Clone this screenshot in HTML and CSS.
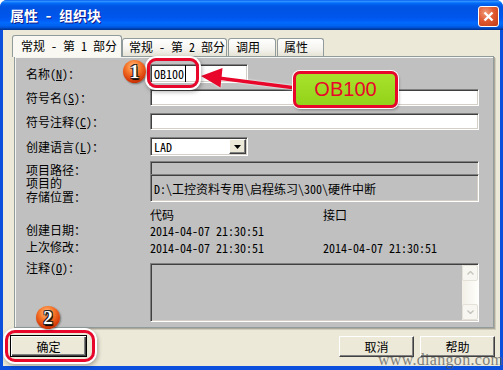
FILE: index.html
```html
<!DOCTYPE html>
<html lang="zh-CN">
<head>
    <meta charset="UTF-8">
    <title>属性 - 组织块</title>
    <link rel="stylesheet" href="styles.css">
</head>
<body>

    <div class="window">
        <div class="titlebar">
            <span class="title">属性 - 组织块</span>
            <span class="close">
                <svg width="13" height="13" viewBox="0 0 13 13"><path d="M2.5 2.5 L10.5 10.5 M10.5 2.5 L2.5 10.5" stroke="#fff" stroke-width="2.4"/></svg>
            </span>
        </div>

        <div class="client">
            <div class="tabs">
                <div class="tab active t1">常规 - 第 1 部分</div>
                <div class="tab t2">常规 - 第 2 部分</div>
                <div class="tab t3">调用</div>
                <div class="tab t4">属性</div>
            </div>

            <div class="pane">
                <div class="row r-name">
                    <label>名称(<u>N</u>)：</label>
                    <div class="field short"><span class="caret">OB100</span></div>
                </div>
                <div class="row r-sym">
                    <label>符号名(<u>S</u>)：</label>
                    <div class="field wide"></div>
                </div>
                <div class="row r-cmt">
                    <label>符号注释(<u>C</u>)：</label>
                    <div class="field wide"></div>
                </div>
                <div class="row r-lang">
                    <label>创建语言(<u>L</u>)：</label>
                    <div class="field short select">
                        <span>LAD</span>
                        <span class="drop"><svg width="7" height="4" viewBox="0 0 7 4"><path d="M0 0 H7 L3.5 4 Z" fill="#000"/></svg></span>
                    </div>
                </div>
                <div class="row r-path">
                    <label>项目路径：</label>
                    <div class="field wide off"></div>
                </div>
                <div class="row r-store">
                    <label>项目的<br>存储位置：</label>
                    <div class="field wide off">D:\工控资料专用\启程练习\300\硬件中断</div>
                </div>
                <div class="row r-head info">
                    <label></label>
                    <span class="c1">代码</span>
                    <span>接口</span>
                </div>
                <div class="row r-made info">
                    <label>创建日期：</label>
                    <span class="c1">2014-04-07 21:30:51</span>
                </div>
                <div class="row r-mod info">
                    <label>上次修改：</label>
                    <span class="c1">2014-04-07 21:30:51</span>
                    <span>2014-04-07 21:30:51</span>
                </div>
                <div class="row r-note">
                    <label>注释(<u>O</u>)：</label>
                    <div class="field wide off memo">
                        <div class="scroll">
                            <span class="sbtn"><svg width="7" height="4" viewBox="0 0 7 4"><path d="M0.5 3.5 L3.5 0.5 L6.5 3.5" fill="none" stroke="#c4c4bc" stroke-width="1.4"/></svg></span>
                            <span class="sbtn"><svg width="7" height="4" viewBox="0 0 7 4"><path d="M0.5 0.5 L3.5 3.5 L6.5 0.5" fill="none" stroke="#c4c4bc" stroke-width="1.4"/></svg></span>
                        </div>
                    </div>
                </div>
            </div>

            <div class="buttons">
                <button class="btn ok">确定</button>
                <button class="btn cancel">取消</button>
                <button class="btn help">帮助</button>
            </div>
        </div>

        <div class="watermark">www.diangon.com</div>

        <!-- annotations drawn over the dialog -->
        <svg class="arrow" width="503" height="370" viewBox="0 0 503 370">
            <line x1="296" y1="88" x2="214" y2="77.5" stroke="#e8062a" stroke-width="3.5"/>
            <polygon points="201,76 222.5,68 220.5,87.5" fill="#e8062a"/>
        </svg>
        <div class="mark mark-name"></div>
        <div class="ball ball-1">1</div>
        <div class="callout">OB100</div>
        <div class="mark mark-ok"></div>
        <div class="ball ball-2">2</div>
    </div>

</body>
</html>
```

FILE: styles.css
```css
body {
    margin: 0;
    background: #fff;
    font-family: "Noto Sans Mono CJK SC", "Noto Sans CJK SC", monospace;
    font-size: 12px;
    color: #000;
}

.window {
    position: relative;
    width: 503px;
    height: 370px;
    box-sizing: border-box;
    padding: 0 3px 4px;
    background: #0a50dc;
    border-radius: 7px 7px 0 0;
    overflow: hidden;
    display: flex;
    flex-direction: column;
}

.titlebar {
    flex: none;
    height: 30px;
    margin: 0 -3px;
    padding: 0 4px 0 10px;
    display: flex;
    align-items: center;
    justify-content: space-between;
    background: linear-gradient(#0058ee 0%, #3593ff 4%, #288eff 6%, #127dff 8%, #036ffc 10%, #0262ee 14%, #0057e5 20%, #0054e3 24%, #0055eb 56%, #005bf5 66%, #026afe 76%, #0062ef 86%, #0052d6 92%, #0040ab 96%, #003092 100%);
}

.title {
    color: #fff;
    font-weight: bold;
    font-size: 14px;
    white-space: pre;
    text-shadow: 1px 1px #0f1a8a;
}

.close {
    width: 21px;
    height: 21px;
    margin-top: 2px;
    box-sizing: border-box;
    border: 1px solid #fff;
    border-radius: 3px;
    background: radial-gradient(circle at 35% 30%, #f09a7a, #e05a32 45%, #c23a14);
    display: flex;
    align-items: center;
    justify-content: center;
}

.client {
    flex: 1;
    background: #ece9d8;
    display: flex;
    flex-direction: column;
}

/* tabs */

.tabs {
    flex: none;
    height: 26px;
    box-sizing: border-box;
    padding-left: 9px;
    display: flex;
    align-items: flex-end;
}

.tab {
    box-sizing: border-box;
    height: 18px;
    border: 1px solid #919b9c;
    border-bottom: none;
    border-radius: 3px 3px 0 0;
    background: linear-gradient(#fff, #f4f3ee 60%, #e6e3d6);
    line-height: 16px;
    white-space: pre;
}

.tab.active {
    height: 22px;
    margin-bottom: -1px;
    position: relative;
    z-index: 1;
    background: #f9f8f3;
    line-height: 20px;
}

.t1 { width: 110px; padding-left: 8px; }
.t2 { width: 105px; padding-left: 6px; }
.t3 { width: 48px; padding-left: 7px; margin-left: 1px; }
.t4 { width: 47px; padding-left: 6px; margin-left: 1px; }

/* tab page */

.pane {
    flex: none;
    box-sizing: border-box;
    width: 480px;
    height: 272px;
    margin-left: 11px;
    padding: 7px 0 0 11px;
    border: 1px solid #919b9c;
    background: #c0c0c0;
    box-shadow: inset 1px 1px #f4f4f0, 1px 1px #aca899, 2px 2px #d0cdbf;
    display: flex;
    flex-direction: column;
}

.row {
    flex: none;
    display: flex;
    align-items: center;
}

.row label {
    flex: none;
    width: 124px;
    line-height: 14px;
}

.r-name { height: 19px; }
.r-sym { height: 17px; margin-top: 6px; }
.r-cmt { height: 17px; margin-top: 7px; }
.r-lang { height: 19px; margin-top: 7px; }
.r-path { height: 17px; margin-top: 5px; }
.r-store { height: 28px; margin-top: -2px; align-items: flex-end; }
.r-store .field { margin-bottom: 2px; }
.r-head { height: 14px; margin-top: 3px; }
.r-made { height: 14px; margin-top: 2px; }
.r-mod { height: 14px; margin-top: 3px; }
.r-note { height: 59px; margin-top: 9px; align-items: flex-start; }
.r-note label { margin-top: -2px; }

.info .c1 {
    width: 173px;
}

.field {
    box-sizing: border-box;
    height: 100%;
    border: 1px solid;
    border-color: #808080 #fff #fff #808080;
    box-shadow: inset 1px 1px #404040, inset -1px -1px #d4d0c8;
    background: #fff;
    padding: 0 3px;
    white-space: pre;
    display: flex;
    align-items: center;
}

.field.short { width: 98px; }
.field.wide { width: 329px; }
.field.off { background: #c0c0c0; }

.caret {
    border-right: 1px solid #000;
    padding-right: 1px;
}

.select {
    justify-content: space-between;
    padding: 0 1px 0 3px;
}

.drop {
    width: 17px;
    height: 15px;
    box-sizing: border-box;
    background: #ece9d8;
    border: 1px solid;
    border-color: #fff #404040 #404040 #fff;
    box-shadow: inset -1px -1px #808080;
    display: flex;
    align-items: center;
    justify-content: center;
}

.memo {
    padding: 1px 0 1px 0;
    justify-content: flex-end;
    align-items: stretch;
}

.scroll {
    width: 16px;
    display: flex;
    flex-direction: column;
    justify-content: space-between;
    background: linear-gradient(to right, #f1efe6, #fefefb);
}

.sbtn {
    height: 16px;
    box-sizing: border-box;
    border: 1px solid #e4e2d8;
    border-radius: 2px;
    background: #f7f6f0;
    display: flex;
    align-items: center;
    justify-content: center;
}

/* dialog buttons */

.buttons {
    flex: none;
    display: flex;
    align-items: flex-start;
    padding: 7px 5px 0 7px;
}

.btn {
    font: inherit;
    color: #000;
    height: 21px;
    margin-top: 1px;
    padding: 0;
    box-sizing: border-box;
    background: #ece9d8;
    border: 1px solid;
    border-color: #fff #404040 #404040 #fff;
    box-shadow: inset -1px -1px #808080;
}

.btn.ok {
    width: 77px;
    height: 22px;
    margin-top: 0;
    border: 1px solid #000;
    box-shadow: inset 1px 1px #fff, inset -1px -1px #404040, inset -2px -2px #808080;
}

.btn.cancel {
    width: 75px;
    margin-left: auto;
}

.btn.help {
    width: 75px;
    margin-left: 6px;
}

.watermark {
    position: absolute;
    left: 378px;
    top: 351px;
    font-family: "Liberation Serif", serif;
    font-size: 16px;
    letter-spacing: 0.3px;
    color: rgba(90, 90, 90, 0.75);
}

/* annotations */

.arrow {
    position: absolute;
    left: 0;
    top: 0;
    pointer-events: none;
    filter: drop-shadow(0 0 1px #fff);
}

.mark {
    position: absolute;
    box-sizing: border-box;
    border: 3px solid #e8062a;
    border-radius: 9px;
    box-shadow: 0 0 0 2px #fff, 1px 2px 4px 2px rgba(0, 0, 0, 0.3);
}

.mark-name {
    left: 147px;
    top: 58px;
    width: 52px;
    height: 30px;
}

.mark-ok {
    left: 5px;
    top: 330px;
    width: 90px;
    height: 32px;
    border-radius: 10px;
}

.ball {
    position: absolute;
    width: 23px;
    height: 23px;
    border-radius: 50%;
    background: radial-gradient(circle at 45% 30%, #ffc48a 0, #f7772a 35%, #d63a08 70%, #8c1e02 100%);
    box-shadow: 1px 1px 2px rgba(0, 0, 0, 0.4);
    color: #fff;
    font: bold 19px/23px "Liberation Serif", serif;
    text-align: center;
    text-shadow: -1px -1px 0 #222, 1px -1px 0 #222, -1px 1px 0 #222, 1px 1px 0 #222, 1px 2px 1px #000;
}

.ball-1 { left: 123px; top: 60px; }
.ball-2 { left: 36px; top: 306px; width: 24px; }

.callout {
    position: absolute;
    left: 293px;
    top: 71px;
    width: 105px;
    height: 37px;
    box-sizing: border-box;
    border: 3px solid #e8062a;
    border-radius: 7px;
    background: linear-gradient(#a8e22c, #93d21a);
    box-shadow: 0 0 0 1px #fff, 1px 2px 3px rgba(0, 0, 0, 0.35);
    color: #e8062a;
    font: 20px/31px "Liberation Sans", sans-serif;
    text-align: center;
}
```
